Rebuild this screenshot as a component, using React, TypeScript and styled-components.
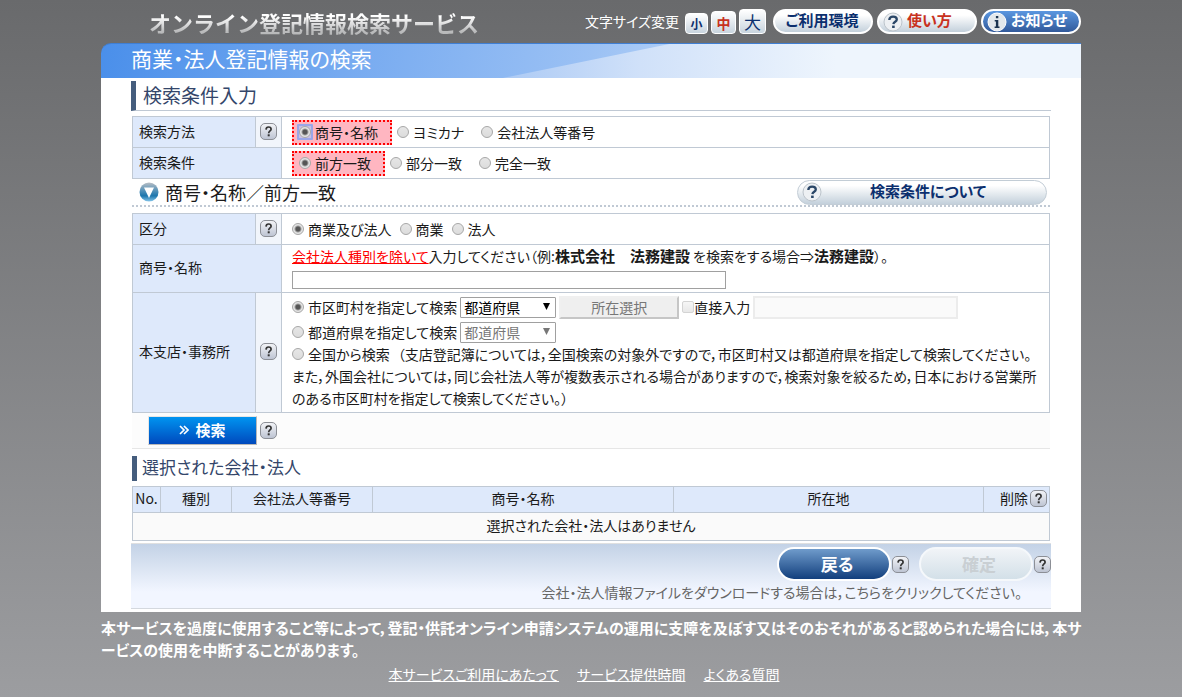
import React from 'react';
import styled, { createGlobalStyle, css } from 'styled-components';

const LINE = '#c0c9d4';

const GlobalStyle = createGlobalStyle`
  * { box-sizing: border-box; }
  html { min-height: 100%; background: linear-gradient(#696a6c, #9c9da0); }
  body {
    margin: 0;
    color: #1a1a1a;
    font-family: 'Noto Sans CJK JP', sans-serif;
    font-size: 14px;
    line-height: 22px;
    font-feature-settings: 'palt';
  }
  button, input, select { font: inherit; font-feature-settings: inherit; margin: 0; }
  h1, h2, h3, p { margin: 0; font-weight: 400; }
`;

const Page = styled.div`
  max-width: 980px;
  margin: 0 auto;
`;

const Header = styled.header`
  display: flex;
  justify-content: space-between;
  align-items: flex-start;
  height: 43px;
  padding: 8px 0 0 48px;
`;

const ServiceName = styled.div`
  font-size: 22px;
  line-height: 28px;
  font-weight: 700;
  font-feature-settings: normal;
  white-space: nowrap;
  color: transparent;
  background: linear-gradient(#ffffff 30%, #b9babb 85%);
  background-clip: text;
`;

const Tools = styled.div`
  display: flex;
  align-items: flex-end;
  gap: 4px;
`;

const SizePicker = styled.div`
  display: flex;
  align-items: flex-end;
  gap: 3px;
  margin-right: 3px;
`;

const SizeCaption = styled.span`
  color: #fff;
  line-height: 26px;
  margin-right: 3px;
  white-space: nowrap;
`;

const SizeButton = styled.button<{ $size: number; $font: number; $active?: boolean }>`
  width: ${p => p.$size + 2}px;
  height: ${p => p.$size}px;
  padding: 0;
  border: 1px solid #fff;
  border-radius: 4px;
  background: linear-gradient(#fff, #c8d4de);
  color: ${p => (p.$active ? '#c8321e' : '#0b2f6e')};
  font-size: ${p => p.$font}px;
  line-height: ${p => p.$size - 5}px;
  font-weight: ${p => (p.$size > 24 ? 400 : 700)};
`;

const Pill = styled.button<{ $tone?: 'red' | 'blue'; $wide?: boolean }>`
  display: flex;
  align-items: center;
  width: ${p => (p.$wide ? 250 : 100)}px;
  height: 25px;
  padding: 0 6px 0 4px;
  border: 2px solid #fff;
  border-radius: 13px;
  background: linear-gradient(#fff 20%, #c3d0db);
  color: ${p => (p.$tone === 'red' ? '#c8321e' : '#0b2f6e')};
  font-size: 15px;
  line-height: 18px;
  font-weight: 700;
  white-space: nowrap;
  ${p => p.$tone === 'blue' && css`
    color: #fff;
    background: linear-gradient(#5b97e0, #31599a);
  `}
  ${p => p.$wide && css`
    padding-right: 16px;
    border: 1px solid #c3cdd6;
  `}
`;

const PillText = styled.span<{ $start?: boolean }>`
  flex: 1;
  padding-bottom: 3px;
  text-align: ${p => (p.$start ? 'left' : 'center')};
`;

const PillIcon = styled.svg`
  flex: none;
  width: 20px;
  height: 20px;
  margin-right: 4px;
`;

const Banner = styled.div`
  position: relative;
  height: 35px;
  padding-left: 30px;
  overflow: hidden;
  border-top: 1px solid #3f7fd4;
  border-top-left-radius: 10px;
  background: linear-gradient(100deg, #4a8fea 0%, #76aaf0 25%, #9bc1f4 50%, #c9def9 70%, #eef5fe 85%);
  &::after {
    content: '';
    position: absolute;
    inset: 0;
    background: linear-gradient(90deg, #a9c8f4 40%, #d0e1f9 55%, #eef5fd 75%);
    clip-path: polygon(41% 100%, 58% 0, 100% 0, 100% 100%);
  }
`;

const BannerTitle = styled.h1`
  color: #fff;
  font-size: 21px;
  line-height: 29px;
`;

const Main = styled.main`
  padding: 3px 30px;
  background: #fff;
`;

const SectionTitle = styled.h2<{ $ruled?: boolean }>`
  padding-left: 7px;
  border-left: 5px solid #455d7d;
  color: #34466a;
  ${p => p.$ruled
    ? css`
        font-size: 19px;
        line-height: 27px;
        padding-bottom: 2px;
        border-bottom: 1px solid ${LINE};
        margin-bottom: 5px;
      `
    : css`
        font-size: 17px;
        line-height: 22px;
        padding-left: 5px;
        padding-bottom: 3px;
        margin: 7px 1px 5px;
      `}
`;

const Sheet = styled.div`
  padding: 0 1px;
`;

const Table = styled.table`
  width: 100%;
  border-collapse: collapse;
  table-layout: fixed;
  th, td { border: 1px solid ${LINE}; padding: 0; }
`;

const Label = styled.th<{ $tall?: number }>`
  height: ${p => p.$tall ?? 31}px;
  && { padding: 0 0 3px 6px; }
  background: #dee9fb;
  text-align: left;
  font-weight: 400;
`;

const HelpButton = styled.button`
  display: block;
  flex: none;
  width: 17px;
  height: 17px;
  padding: 0;
  border: 0;
  background: none;
  svg { display: block; }
`;

const HelpCell = styled.td`
  && { padding-bottom: 2px; }
  background: #f1f5fb;
  ${HelpButton} { margin: 0 auto; }
`;

const Field = styled.td<{ $top?: boolean }>`
  && { padding-left: 10px; }
  vertical-align: ${p => (p.$top ? 'top' : 'middle')};
`;

const Line = styled.div<{ $h?: number; $gap?: number }>`
  display: flex;
  align-items: center;
  height: ${p => p.$h ?? 24}px;
  gap: ${p => p.$gap ?? 3}px;
  white-space: nowrap;
`;

const Choice = styled.label<{ $picked?: boolean; $roomy?: boolean; $tight?: boolean }>`
  display: inline-flex;
  align-items: center;
  gap: ${p => (p.$tight ? 0 : 4)}px;
  white-space: nowrap;
  ${p => p.$roomy && css`padding-right: 12px;`}
  ${p => p.$picked && css`
    height: 25px;
    padding-left: 5px;
    border: 2px dotted #f00;
    background: #ffb6c1;
  `}
`;

const Radio = styled.input.attrs({ type: 'radio' })`
  appearance: none;
  flex: none;
  width: 12px;
  height: 12px;
  border: 1px solid #a8a8a8;
  border-radius: 50%;
  background: linear-gradient(#e6e6e6, #dcdcdc);
  &:checked {
    background: radial-gradient(circle, #555 0 2px, #e4e4e4 4px);
  }
`;

const FocusRing = styled.span`
  display: inline-flex;
  margin: -2px;
  border: 2px solid #9ba6e8;
  border-radius: 1px;
  background: #c9bfe4;
`;

const Check = styled.input.attrs({ type: 'checkbox' })`
  appearance: none;
  width: 12px;
  height: 12px;
  border: 1px solid #d4d4d4;
  border-radius: 2px;
  background: linear-gradient(#f6f6f6, #e8e8e8);
`;

const SubHead = styled.div`
  display: flex;
  align-items: center;
  justify-content: space-between;
  height: 28px;
  margin-bottom: 6px;
  padding: 0 3px 0 7px;
  border-bottom: 2px dotted ${LINE};
`;

const SubTitle = styled.h3`
  display: flex;
  align-items: center;
  gap: 6px;
  font-size: 18px;
  line-height: 24px;
`;

const Guide = styled.p`
  margin-bottom: 4px;
  white-space: nowrap;
`;

const ExceptLink = styled.a`
  color: #f00;
  text-decoration: underline;
`;

const Example = styled.b`
  font-size: 15px;
  line-height: 20px;
`;

const NameInput = styled.input`
  display: block;
  width: 434px;
  height: 18px;
  padding: 0 4px;
  border: 1px solid #a0a0a0;
`;

const SelectBox = styled.span`
  position: relative;
  display: inline-flex;
`;

const Select = styled.select`
  appearance: none;
  width: 96px;
  height: 21px;
  padding: 0 3px;
  border: 1px solid #a0a0a0;
  border-radius: 1px;
  background: #fff;
  color: #000;
  line-height: 19px;
  &:disabled { color: #777; opacity: 1; }
`;

const Arrow = styled.svg`
  position: absolute;
  right: 6px;
  top: 6px;
  pointer-events: none;
`;

const PlaceButton = styled.button`
  width: 120px;
  height: 23px;
  padding: 0;
  border: 2px solid;
  border-color: #f0f0f0 #c6c6c6 #c6c6c6 #f0f0f0;
  background: #efefef;
  color: #777;
  line-height: 18px;
`;

const DirectInput = styled.input`
  width: 205px;
  height: 23px;
  border: 2px solid #ececec;
  background: #fafafa;
`;

const Note = styled.p`
  white-space: nowrap;
  ${Choice} { margin-right: 8px; }
`;

const SearchBar = styled.div`
  display: flex;
  align-items: center;
  gap: 3px;
  height: 36px;
  padding: 0 0 1px 16px;
  border-bottom: 1px solid #e6e6e6;
  background: #fcfcfc;
`;

const SearchButton = styled.button`
  display: flex;
  align-items: center;
  justify-content: center;
  gap: 6px;
  width: 109px;
  height: 29px;
  padding: 0;
  border: 1px solid #e6e6e6;
  border-right-color: #b8b8b8;
  border-bottom-color: #b8b8b8;
  background: linear-gradient(#0094f0, #0049bd);
  color: #fff;
  font-size: 15px;
  font-weight: 700;
`;

const HeadCell = styled.th`
  height: 26px;
  && { padding-bottom: 3px; }
  background: #dee9fb;
  font-weight: 400;
  white-space: nowrap;
`;

const DeleteHead = styled.span`
  display: flex;
  align-items: center;
  justify-content: flex-end;
  gap: 2px;
  padding-right: 2px;
`;

const EmptyCell = styled.td`
  height: 28px;
  && { padding-bottom: 4px; }
  background: #fafafa;
  text-align: center;
`;

const ActionPanel = styled.div`
  margin-top: 2px;
  height: 66px;
  padding-top: 3px;
  border-top: 1px solid #e0e0e0;
  border-bottom: 1px solid #d4d8de;
  background: linear-gradient(#c3d2e6, #f2f6ff 75%);
`;

const Actions = styled.div`
  display: flex;
  align-items: center;
  justify-content: flex-end;
  gap: 1px;
`;

const ActionButton = styled.button`
  width: 114px;
  height: 34px;
  padding: 0 0 0 6px;
  border: 2px solid #fff;
  border-radius: 17px;
  background: linear-gradient(#6f9bcb, #123f7d);
  color: #fff;
  font-size: 17px;
  font-weight: 700;
  line-height: 28px;
  &:disabled {
    margin-left: 9px;
    border-color: #f5f8fb;
    background: linear-gradient(#f1f4f7, #d3e0e8);
    color: #c9cfd3;
  }
`;

const DownloadNote = styled.p`
  padding-right: 29px;
  color: #666;
  text-align: right;
`;

const Footer = styled.footer`
  padding: 5px 0;
  color: #fff;
`;

const Warning = styled.p`
  font-size: 15px;
  font-weight: 700;
  white-space: nowrap;
`;

const FooterLinks = styled.nav`
  display: flex;
  justify-content: center;
  gap: 18px;
  margin: 2px 14px 0 0;
  a { color: #fff; }
`;

const Help = () => (
  <HelpButton type="button" aria-label="ヘルプ">
    <svg width="17" height="17" viewBox="0 0 17 17">
      <defs>
        <linearGradient id="helpFill" x1="0" y1="0" x2="0" y2="1">
          <stop offset="0" stopColor="#f4f5f8" />
          <stop offset="1" stopColor="#bcc3d2" />
        </linearGradient>
      </defs>
      <rect x="0.5" y="0.5" width="16" height="16" rx="4.5" fill="url(#helpFill)" stroke="#8c8f96" />
      <path d="M6 6.6C6.1 4.7 7.2 4 8.6 4s2.5.8 2.5 2.2c0 1.7-2.4 1.9-2.4 4" fill="none" stroke="#333" strokeWidth="1.7" />
      <rect x="7.7" y="11.3" width="2" height="2" fill="#333" />
    </svg>
  </HelpButton>
);

const QuestionIcon = () => (
  <PillIcon viewBox="0 0 20 20" aria-hidden="true">
    <circle cx="10" cy="10" r="9" fill="#edf0f3" stroke="#bcc4cb" />
    <path d="M6.3 8C6.4 5.7 8 4.6 10.1 4.6s3.7 1.1 3.7 3c0 2.2-3.2 2.2-3.4 4.6" fill="none" stroke="#2b4768" strokeWidth="2.3" />
    <rect x="9.1" y="13.6" width="2.6" height="2.4" fill="#2b4768" />
  </PillIcon>
);

const InfoIcon = () => (
  <PillIcon viewBox="0 0 20 20" aria-hidden="true">
    <circle cx="10" cy="10" r="9" fill="#e3e8ec" stroke="#fff" />
    <path d="M8.9 4h2.4v2.2H8.9zM7.7 8h3.6v6.4h1.2V16H7.6v-1.6h1.3V9.6H7.7z" fill="#1c3450" />
  </PillIcon>
);

const OrbIcon = () => (
  <svg width="20" height="20" viewBox="0 0 20 20" aria-hidden="true">
    <defs>
      <linearGradient id="orbFill" x1="0" y1="0" x2="0" y2="1">
        <stop offset="0" stopColor="#b9bec4" />
        <stop offset="0.45" stopColor="#4e8fb8" />
        <stop offset="0.7" stopColor="#1c76ad" />
        <stop offset="1" stopColor="#86c6ea" />
      </linearGradient>
    </defs>
    <circle cx="10" cy="10" r="9.5" fill="url(#orbFill)" />
    <path d="M5 5.5h10L10 16z" fill="#fff" />
  </svg>
);

const Prefecture = ({ label, disabled }: { label: string; disabled?: boolean }) => (
  <SelectBox>
    <Select aria-label={label} disabled={disabled}>
      <option>都道府県</option>
    </Select>
    <Arrow width="7" height="7" viewBox="0 0 7 7">
      <path d="M0 0h7L3.5 7z" fill={disabled ? '#777' : '#000'} />
    </Arrow>
  </SelectBox>
);

export default function App() {
  return (
    <>
      <GlobalStyle />
      <Page>
        <Header>
          <ServiceName>オンライン登記情報検索サービス</ServiceName>
          <Tools>
            <SizePicker>
              <SizeCaption>文字サイズ変更</SizeCaption>
              <SizeButton type="button" $size={21} $font={12}>小</SizeButton>
              <SizeButton type="button" $size={23} $font={14} $active>中</SizeButton>
              <SizeButton type="button" $size={25} $font={17}>大</SizeButton>
            </SizePicker>
            <Pill type="button"><PillText>ご利用環境</PillText></Pill>
            <Pill type="button" $tone="red"><QuestionIcon /><PillText $start>使い方</PillText></Pill>
            <Pill type="button" $tone="blue"><InfoIcon /><PillText $start>お知らせ</PillText></Pill>
          </Tools>
        </Header>

        <Banner><BannerTitle>商業・法人登記情報の検索</BannerTitle></Banner>

        <Main>
          <SectionTitle $ruled>検索条件入力</SectionTitle>
          <Sheet>
            <Table>
              <colgroup>
                <col style={{ width: 123 }} />
                <col style={{ width: 26 }} />
                <col />
              </colgroup>
              <tbody>
                <tr>
                  <Label scope="row">検索方法</Label>
                  <HelpCell><Help /></HelpCell>
                  <Field>
                    <Line $h={25} $gap={5}>
                      <Choice $picked $roomy>
                        <FocusRing><Radio name="method" defaultChecked /></FocusRing>
                        商号・名称
                      </Choice>
                      <Choice $roomy><Radio name="method" />ヨミカナ</Choice>
                      <Choice><Radio name="method" />会社法人等番号</Choice>
                    </Line>
                  </Field>
                </tr>
                <tr>
                  <Label scope="row" colSpan={2}>検索条件</Label>
                  <Field>
                    <Line $h={25} $gap={5}>
                      <Choice $picked $roomy><Radio name="match" defaultChecked />前方一致</Choice>
                      <Choice $roomy><Radio name="match" />部分一致</Choice>
                      <Choice><Radio name="match" />完全一致</Choice>
                    </Line>
                  </Field>
                </tr>
              </tbody>
            </Table>

            <SubHead>
              <SubTitle><OrbIcon />商号・名称／前方一致</SubTitle>
              <Pill type="button" $wide><QuestionIcon /><PillText>検索条件について</PillText></Pill>
            </SubHead>

            <Table>
              <colgroup>
                <col style={{ width: 123 }} />
                <col style={{ width: 26 }} />
                <col />
              </colgroup>
              <tbody>
                <tr>
                  <Label scope="row">区分</Label>
                  <HelpCell><Help /></HelpCell>
                  <Field>
                    <Line $gap={8}>
                      <Choice><Radio name="kind" defaultChecked />商業及び法人</Choice>
                      <Choice><Radio name="kind" />商業</Choice>
                      <Choice><Radio name="kind" />法人</Choice>
                    </Line>
                  </Field>
                </tr>
                <tr>
                  <Label scope="row" colSpan={2} $tall={48}><label htmlFor="corpName">商号・名称</label></Label>
                  <Field $top>
                    <Guide>
                      <ExceptLink href="#types">会社法人種別を除いて</ExceptLink>
                      入力してください（例:<Example>株式会社　法務建設</Example> を検索をする場合⇒<Example>法務建設</Example>）。
                    </Guide>
                    <NameInput id="corpName" type="text" />
                  </Field>
                </tr>
                <tr>
                  <Label scope="row" $tall={120}>本支店・事務所</Label>
                  <HelpCell><Help /></HelpCell>
                  <Field $top>
                    <Line $h={28}>
                      <Choice><Radio name="office" defaultChecked />市区町村を指定して検索</Choice>
                      <Prefecture label="市区町村の都道府県" />
                      <PlaceButton type="button" disabled>所在選択</PlaceButton>
                      <Choice $tight><Check disabled />直接入力</Choice>
                      <DirectInput type="text" aria-label="所在の直接入力" disabled />
                    </Line>
                    <Line $h={22}>
                      <Choice><Radio name="office" />都道府県を指定して検索</Choice>
                      <Prefecture label="検索する都道府県" disabled />
                    </Line>
                    <Note>
                      <Choice><Radio name="office" />全国から検索</Choice>
                      （支店登記簿については，全国検索の対象外ですので，市区町村又は都道府県を指定して検索してください。
                      <br />
                      また，外国会社については，同じ会社法人等が複数表示される場合がありますので，検索対象を絞るため，日本における営業所
                      <br />
                      のある市区町村を指定して検索してください。）
                    </Note>
                  </Field>
                </tr>
              </tbody>
            </Table>

            <SearchBar>
              <SearchButton type="button">
                <svg width="10" height="10" viewBox="0 0 10 10" aria-hidden="true">
                  <path d="M1 1l4 4-4 4M5 1l4 4-4 4" fill="none" stroke="#fff" strokeWidth="1.7" />
                </svg>
                検索
              </SearchButton>
              <Help />
            </SearchBar>
          </Sheet>

          <SectionTitle>選択された会社・法人</SectionTitle>
          <Sheet>
            <Table>
              <colgroup>
                <col style={{ width: 28 }} />
                <col style={{ width: 71 }} />
                <col style={{ width: 141 }} />
                <col />
                <col style={{ width: 310 }} />
                <col style={{ width: 66 }} />
              </colgroup>
              <thead>
                <tr>
                  <HeadCell>No.</HeadCell>
                  <HeadCell>種別</HeadCell>
                  <HeadCell>会社法人等番号</HeadCell>
                  <HeadCell>商号・名称</HeadCell>
                  <HeadCell>所在地</HeadCell>
                  <HeadCell><DeleteHead>削除<Help /></DeleteHead></HeadCell>
                </tr>
              </thead>
              <tbody>
                <tr><EmptyCell colSpan={6}>選択された会社・法人はありません</EmptyCell></tr>
              </tbody>
            </Table>
          </Sheet>

          <ActionPanel>
            <Actions>
              <ActionButton type="button">戻る</ActionButton>
              <Help />
              <ActionButton type="button" disabled>確定</ActionButton>
              <Help />
            </Actions>
            <DownloadNote>会社・法人情報ファイルをダウンロードする場合は，こちらをクリックしてください。</DownloadNote>
          </ActionPanel>
        </Main>

        <Footer>
          <Warning>
            本サービスを過度に使用すること等によって，登記・供託オンライン申請システムの運用に支障を及ぼす又はそのおそれがあると認められた場合には，本サ
            <br />
            ービスの使用を中断することがあります。
          </Warning>
          <FooterLinks>
            <a href="#terms">本サービスご利用にあたって</a>
            <a href="#hours">サービス提供時間</a>
            <a href="#faq">よくある質問</a>
          </FooterLinks>
        </Footer>
      </Page>
    </>
  );
}
